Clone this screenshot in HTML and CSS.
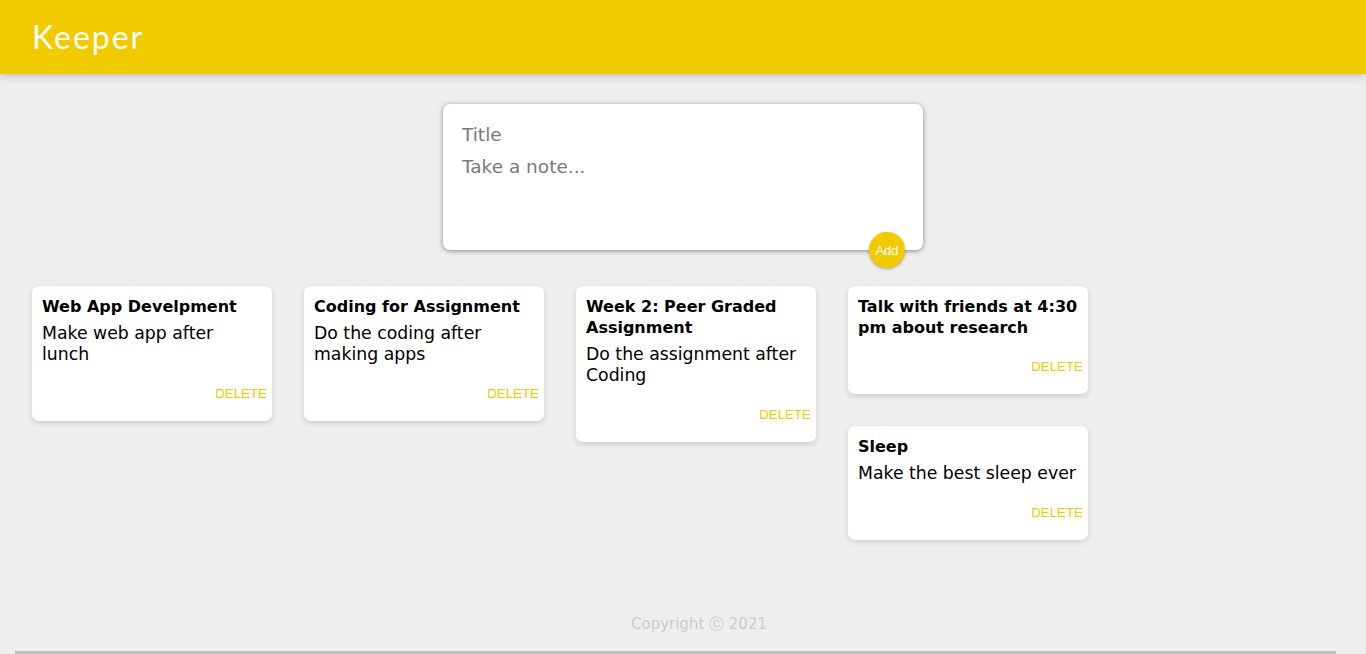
FILE: index.html
```html
<!DOCTYPE html>
<html lang="en">
<head>
<meta charset="utf-8">
<title>Keeper</title>
<link rel="stylesheet" href="styles.css">
</head>
<body>
  <header class="app-header">
    <h1 class="brand">Keeper</h1>
  </header>

  <form class="create-note">
    <input class="create-title" name="title" placeholder="Title">
    <textarea class="create-content" name="content" placeholder="Take a note..." rows="3"></textarea>
    <button type="button" class="add-btn">Add</button>
  </form>

  <main class="notes">
    <div class="note">
      <h1 class="note-title">Web App Develpment</h1>
      <p class="note-body">Make web app after lunch</p>
      <button class="del-btn">DELETE</button>
    </div>
    <div class="note">
      <h1 class="note-title">Coding for Assignment</h1>
      <p class="note-body">Do the coding after making apps</p>
      <button class="del-btn">DELETE</button>
    </div>
    <div class="note">
      <h1 class="note-title">Week 2: Peer Graded Assignment</h1>
      <p class="note-body">Do the assignment after Coding</p>
      <button class="del-btn">DELETE</button>
    </div>
    <div class="note">
      <h1 class="note-title">Talk with friends at 4:30 pm about research</h1>
      <p class="note-body"></p>
      <button class="del-btn">DELETE</button>
    </div>
    <div class="note">
      <h1 class="note-title">Sleep</h1>
      <p class="note-body">Make the best sleep ever</p>
      <button class="del-btn">DELETE</button>
    </div>
  </main>

  <footer class="app-footer">
    <p class="copy">Copyright ⓒ 2021</p>
  </footer>
  <div class="scroll-thumb"></div>
</body>
</html>
```

FILE: styles.css
```css
* {
  margin: 0;
  padding: 0;
  box-sizing: border-box;
}

html {
  font-family: "DejaVu Sans", "Noto Sans", sans-serif;
}

body {
  background: #eeeeee;
  padding: 0 16px;
  min-height: 654px;
}

.app-header {
  background-color: #f1ca00;
  margin: 0 -16px;
  padding: 16px 32px;
  box-shadow: 0 0 10px 0 rgba(0, 0, 0, 0.3);
}

.brand {
  color: #ffffff;
  font-family: "Lato", "Noto Sans", sans-serif;
  font-weight: 400;
  font-size: 32px;
  line-height: 42px;
  letter-spacing: 2px;
}

.create-note {
  position: relative;
  width: 480px;
  height: 146px;
  margin: 30px auto 20px auto;
  background: #ffffff;
  padding: 15px;
  border-radius: 7px;
  box-shadow: 0 1px 5px rgb(138, 137, 137);
}

.create-title,
.create-content {
  display: block;
  width: 100%;
  border: none;
  padding: 4px;
  outline: none;
  font-size: 18.5px;
  font-family: inherit;
  line-height: 24px;
  resize: none;
  color: #333;
  background: transparent;
}

.create-title::placeholder,
.create-content::placeholder {
  color: #7a7a7a;
}

.add-btn {
  position: absolute;
  right: 18px;
  bottom: -18px;
  background: #f1ca00;
  color: #ffffff;
  border: none;
  border-radius: 50%;
  width: 36px;
  height: 36px;
  font-family: "Liberation Sans", Arial, sans-serif;
  font-size: 13px;
  box-shadow: 0 1px 3px rgba(0, 0, 0, 0.3);
}

.notes {
  display: flow-root;
}

.note {
  background: #ffffff;
  border-radius: 7px;
  box-shadow: 0 2px 5px #cccccc;
  padding: 10px;
  width: 240px;
  margin: 16px;
  float: left;
}

.note-title {
  font-size: 16px;
  font-weight: 700;
  line-height: 21px;
  margin-bottom: 6px;
  color: #000;
}

.note-body {
  font-size: 17.3px;
  line-height: 21px;
  margin-bottom: 10px;
  color: #000;
  white-space: pre-wrap;
  word-wrap: break-word;
}

.del-btn {
  float: right;
  height: 36px;
  padding: 0;
  margin-right: -5px;
  background: none;
  border: none;
  color: #f1ca00;
  font-family: "Liberation Sans", Arial, sans-serif;
  font-size: 13.33px;
}

.app-footer {
  position: absolute;
  left: 0;
  bottom: 0;
  width: 100%;
  height: 40px;
  padding-left: 32px;
  text-align: center;
}

.copy {
  color: #cccccc;
  font-size: 15px;
  line-height: 20px;
}

.scroll-thumb {
  position: absolute;
  left: 15px;
  bottom: 0;
  width: 1321px;
  height: 3px;
  background: #bdbdbd;
}
```
